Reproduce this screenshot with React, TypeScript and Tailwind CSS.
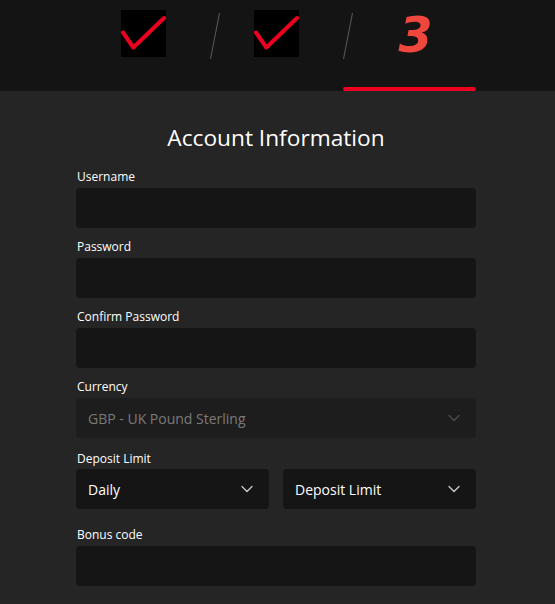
import { ChevronDown } from "lucide-react"

function CheckBox() {
  return (
    <div className="w-[45px] h-[47px] bg-black">
      <svg width="45" height="47" viewBox="0 0 45 47">
        <polyline
          points="2,22.5 12.3,37.5 43,8"
          fill="none"
          stroke="#ec0020"
          strokeWidth="4"
          strokeLinecap="round"
          strokeLinejoin="round"
        />
      </svg>
    </div>
  )
}

function Slash() {
  return (
    <svg className="absolute left-0 top-[12px]" width="10" height="48" viewBox="0 0 10 48">
      <line x1="9.5" y1="1" x2="0.5" y2="47" stroke="#5a5a5a" strokeWidth="1" />
    </svg>
  )
}

function Field({ label, last }: { label: string; last?: boolean }) {
  return (
    <div className={last ? "" : "mb-[11px]"}>
      <label className="block text-[12px] leading-4 text-white mb-[3px] pl-px">{label}</label>
      <input className="block w-full h-10 rounded bg-[#151515] outline-none px-3 text-white text-sm" />
    </div>
  )
}

function Select({ value, dim }: { value: string; dim?: boolean }) {
  return (
    <div
      className={
        "flex items-center justify-between h-10 rounded pl-3 pr-[12px] text-[14px] " +
        (dim ? "bg-[#1d1d1d] text-[#7a7a7a]" : "bg-[#151515] text-white")
      }
    >
      <span>{value}</span>
      <ChevronDown size={20} strokeWidth={1.6} className={dim ? "text-[#4d4d4d]" : "text-[#c9c9c9]"} />
    </div>
  )
}

export default function App() {
  return (
    <div className="min-h-screen bg-[#252525] font-['Open_Sans',sans-serif]">
      {/* Steps */}
      <header className="bg-[#141414] h-[91px]">
        <div className="ml-[77px] w-[399px] h-full grid grid-cols-3">
          <div className="flex flex-col items-center pt-[10px]">
            <CheckBox />
          </div>
          <div className="relative flex flex-col items-center pt-[10px]">
            <Slash />
            <CheckBox />
          </div>
          <div className="relative flex flex-col items-center">
            <Slash />
            <span className="mt-[4px] pl-4 pr-1 font-['DejaVu_Sans',sans-serif] text-[49px] leading-[64px] font-bold italic text-[#ef463e]">
              3
            </span>
            <div className="mt-auto w-full h-1 rounded-full bg-[#ec0020]" />
          </div>
        </div>
      </header>

      {/* Form */}
      <form className="ml-[76px] w-[400px] pt-[32px] pb-6">
        <h1 className="text-[22.7px] leading-[30px] text-white text-center mb-[16px]">Account Information</h1>
        <Field label="Username" />
        <Field label="Password" />
        <Field label="Confirm Password" />
        <div className="mb-[13px]">
          <label className="block text-[12px] leading-4 text-white mb-[3px] pl-px">Currency</label>
          <Select value="GBP - UK Pound Sterling" dim />
        </div>
        <div className="mb-[18px]">
          <label className="block text-[12px] leading-4 text-white mb-[2px] pl-px">Deposit Limit</label>
          <div className="grid grid-cols-2 gap-[14px]">
            <Select value="Daily" />
            <Select value="Deposit Limit" />
          </div>
        </div>
        <Field label="Bonus code" last />
      </form>
    </div>
  )
}
